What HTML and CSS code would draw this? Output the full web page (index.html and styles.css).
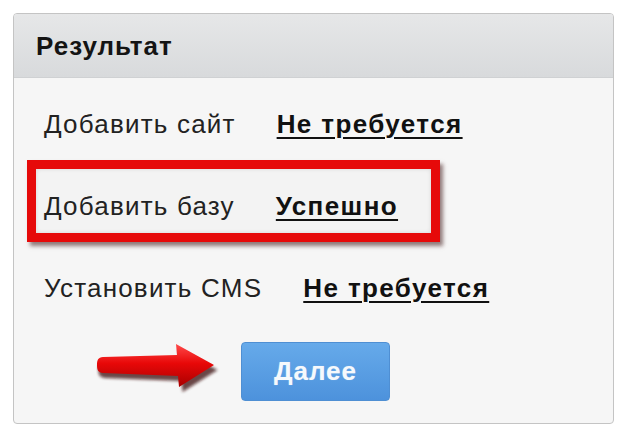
FILE: index.html
```html
<!DOCTYPE html>
<html lang="ru">
<head>
<meta charset="utf-8">
<title>Результат</title>
<link rel="stylesheet" href="styles.css">
</head>
<body>
<div class="panel">
  <div class="panel-header">Результат</div>
  <div class="panel-body">
    <div class="row row-first">
      <span class="label">Добавить сайт</span>
      <span class="status">Не требуется</span>
    </div>
    <div class="highlight">
      <div class="row">
        <span class="label">Добавить базу</span>
        <span class="status">Успешно</span>
      </div>
    </div>
    <div class="row row-third">
      <span class="label">Установить CMS</span>
      <span class="status">Не требуется</span>
    </div>
    <div class="actions">
      <svg class="arrow" width="124" height="54" viewBox="0 0 124 54" aria-hidden="true">
        <defs>
          <linearGradient id="ag" x1="0" y1="0" x2="0" y2="1">
            <stop offset="0" stop-color="#ff4a4a"/>
            <stop offset="0.45" stop-color="#e80808"/>
            <stop offset="1" stop-color="#a80000"/>
          </linearGradient>
          <filter id="blur" x="-10%" y="-20%" width="130%" height="160%">
            <feGaussianBlur stdDeviation="1.6"/>
          </filter>
        </defs>
        <path d="M7 16 L82 14 L81 3 L120 24 L85 46 L84 35 L7 32 C2 31 1 29 1 24 C1 19 2 17 7 16 Z" fill="#3a1010" opacity="0.75" filter="url(#blur)" transform="translate(1.5 3)"/>
        <path d="M7 14 L81 12 L80 1 L118 22 L83 44 L82 33 L7 30 C2 29.5 1 27 1 22 C1 17 2 14.5 7 14 Z" fill="url(#ag)"/>
      </svg>
      <button class="btn" type="button">Далее</button>
    </div>
  </div>
</div>
</body>
</html>
```

FILE: styles.css
```css
html, body {
  margin: 0;
  padding: 0;
  background: #ffffff;
}

body {
  font-family: "Liberation Sans", Arial, sans-serif;
  color: #1e1e1e;
}

.panel {
  box-sizing: border-box;
  margin: 13px 0 0 13px;
  width: 601px;
  height: 411px;
  border: 1px solid #c4c4c4;
  border-radius: 4px;
  background: #f6f6f6;
  overflow: hidden;
  display: flex;
  flex-direction: column;
}

.panel-header {
  box-sizing: border-box;
  height: 64px;
  padding-left: 22px;
  display: flex;
  align-items: center;
  padding-top: 2px;
  background: linear-gradient(#e6e7e8, #d8dadc);
  border-bottom: 1px solid #cfd1d3;
  font-weight: bold;
  font-size: 26px;
  letter-spacing: 1px;
  color: #141414;
}

.panel-body {
  padding-left: 30px;
  display: flex;
  flex-direction: column;
  align-items: flex-start;
}

.row {
  display: flex;
  align-items: center;
  gap: 41px;
  height: 30px;
}

.row-first {
  margin-top: 31px;
}

.label {
  font-size: 26px;
  letter-spacing: 1.2px;
  color: #222;
}

.status {
  font-size: 26px;
  font-weight: bold;
  letter-spacing: 1.4px;
  color: #111;
  text-decoration: underline;
  text-decoration-thickness: 2px;
  text-underline-offset: 4px;
}

.highlight {
  box-sizing: border-box;
  margin: 21px 0 0 -17px;
  width: 413px;
  height: 82px;
  border: 9px solid #e60a0a;
  padding: 22px 0 0 8px;
  background: #f3f3f3;
  box-shadow: 3px 4px 4px rgba(60, 20, 20, 0.55), inset 0 0 4px rgba(0, 0, 0, 0.12);
}

.row-third {
  margin-top: 31px;
}

.actions {
  display: flex;
  align-items: center;
  margin-top: 39px;
  margin-left: 52px;
  gap: 21px;
}

.arrow {
  display: block;
  margin-top: -4px;
}

.btn {
  box-sizing: border-box;
  width: 149px;
  height: 59px;
  border: 1px solid #4f8fd3;
  border-radius: 4px;
  background: linear-gradient(#66aaea, #4d92dc);
  color: #f6f9fc;
  font-family: "Liberation Sans", Arial, sans-serif;
  font-weight: bold;
  font-size: 26px;
  letter-spacing: 1px;
  padding: 0;
  text-shadow: 0 0 1px rgba(255, 255, 255, 0.4);
}
```
